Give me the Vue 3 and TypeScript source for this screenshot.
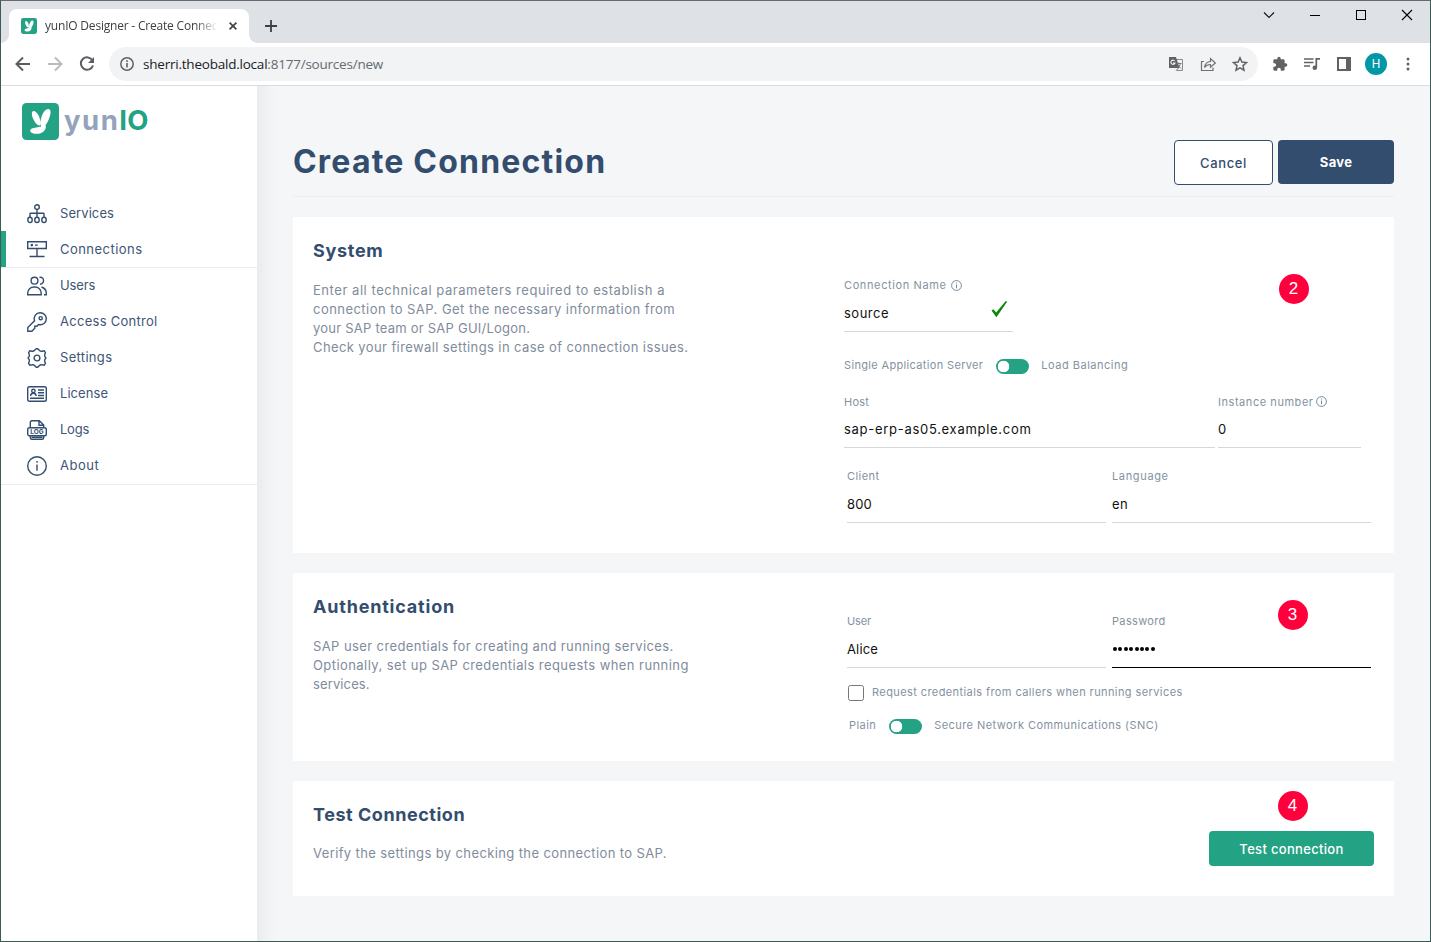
<script setup lang="ts">
import { ref } from 'vue'

interface NavItem { label: string; icon: string; tracking: number }
interface Line { text: string; tracking: number }

const nav: NavItem[] = [
  { label: 'Services', icon: 'services', tracking: 0.08 },
  { label: 'Connections', icon: 'connections', tracking: 0.46 },
  { label: 'Users', icon: 'users', tracking: -0.15 },
  { label: 'Access Control', icon: 'key', tracking: 0.28 },
  { label: 'Settings', icon: 'gear', tracking: 0.32 },
  { label: 'License', icon: 'license', tracking: 0.06 },
  { label: 'Logs', icon: 'logs', tracking: -0.24 },
  { label: 'About', icon: 'about', tracking: 0.5 },
]
const active = ref('Connections')

const systemText: Line[] = [
  { text: 'Enter all technical parameters required to establish a', tracking: 0.55 },
  { text: 'connection to SAP. Get the necessary information from', tracking: 0.455 },
  { text: 'your SAP team or SAP GUI/Logon.', tracking: 0.23 },
  { text: 'Check your firewall settings in case of connection issues.', tracking: 0.395 },
]
const authText: Line[] = [
  { text: 'SAP user credentials for creating and running services.', tracking: 0.405 },
  { text: 'Optionally, set up SAP credentials requests when running', tracking: 0.43 },
  { text: 'services.', tracking: 0.12 },
]
const testText: Line[] = [
  { text: 'Verify the settings by checking the connection to SAP.', tracking: 0.385 },
]
const track = (n: number) => ({ letterSpacing: `${n}px` })
</script>

<template>
  <div class="window">
    <div class="tabstrip">
      <div class="tab">
        <svg class="favicon" viewBox="0 0 37 37">
          <rect width="37" height="37" rx="5" fill="#23a284" />
          <path fill="#fff" d="M11.500 7C8.700 7.500 9 12 11 16C13 20 15.500 22.500 18 22.500C20 18 15.500 6.500 11.500 7ZM26.500 5.500C30.500 6 29 12.500 27 17C24.500 22 22.500 25.500 19.500 25C16.500 24 19.500 5.500 26.500 5.500ZM8 27.500C9.500 23.500 15 24.500 24.500 22C24.500 28 20.500 31.500 15 31.500C11.500 31.500 8.500 30 8 27.500Z" />
        </svg>
        <span class="tab-title">yunIO Designer - Create Connec</span>
        <svg class="tab-close" viewBox="0 0 8 8"><path d="M.6.600 7.400 7.400M7.400.600.600 7.400" fill="none" stroke="#3c4043" stroke-width="1.600" /></svg>
      </div>
      <svg class="plus" viewBox="0 0 12 12"><path d="M6 0V12M0 6H12" stroke="#3c4043" stroke-width="1.800" /></svg>
      <div class="win-controls">
        <svg viewBox="0 0 12 12"><path d="M1 3.500 6 8.500 11 3.500" fill="none" stroke="#111" stroke-width="1.100" /></svg>
        <svg viewBox="0 0 12 12"><path d="M1 6.500H11" stroke="#000" stroke-width="1" /></svg>
        <svg viewBox="0 0 12 12"><rect x="1.500" y="1.500" width="9" height="9" fill="none" stroke="#000" /></svg>
        <svg viewBox="0 0 12 12"><path d="M1 1 11 11M11 1 1 11" stroke="#000" stroke-width="1.100" /></svg>
      </div>
    </div>

    <div class="toolbar">
      <svg class="nav-ic" viewBox="0 0 16 16"><path d="M15 8H2M8 1.500 1.500 8 8 14.500" fill="none" stroke="#5a5d61" stroke-width="2" /></svg>
      <svg class="nav-ic" viewBox="0 0 16 16"><path d="M1 8H14M8 1.500 14.500 8 8 14.500" fill="none" stroke="#b9bbbe" stroke-width="2" /></svg>
      <svg class="nav-ic" viewBox="0 0 16 16"><path d="M13.500 4.500A6.200 6.200 0 1 0 14 9.500" fill="none" stroke="#5a5d61" stroke-width="2" /><path d="M15 1V7H9Z" fill="#5a5d61" /></svg>
      <div class="address">
        <svg class="site-info" viewBox="0 0 14 14"><circle cx="7" cy="7" r="6.200" fill="none" stroke="#5f6368" stroke-width="1.500" /><path d="M7 6V10.500M7 3.300V5" stroke="#5f6368" stroke-width="1.600" /></svg>
        <span class="url"><b>sherri.theobald.local</b>:8177/sources/new</span>
        <svg class="addr-ic" viewBox="0 0 16 16">
          <path d="M5.500 3.500H14.500V14.500H8.500" fill="none" stroke="#85888c" />
          <path d="M1 1H8L11.500 12H1Z" fill="#5f6368" />
          <path d="M6.700 5A2.100 2.100 0 1 0 7 7H5" fill="none" stroke="#f1f3f4" stroke-width="1.100" />
          <path d="M8.500 7.500H13.500M11 6.500V7.500M12.500 7.500C12 9.500 10.500 11 9.500 11.500M9.700 9 13 12.500M8.200 14.500 10.500 12" fill="none" stroke="#74777b" stroke-width="1" />
        </svg>
        <svg class="addr-ic" viewBox="0 0 16 16"><path d="M4 5.500H1.500V14.500H13V11.500M4.500 11.500C5 7.500 7 5.800 10.500 5.500V2.500L15.400 7 10.500 11.300V8.500C8 8.500 6 9.300 4.500 11.500Z" fill="none" stroke="#6d7074" stroke-width="1.200" /></svg>
        <svg class="addr-ic" viewBox="0 0 16 16"><path d="M8 1.800 9.850 6.100 14.500 6.500 11 9.600 12 14.200 8 11.800 4 14.200 5 9.600 1.500 6.500 6.150 6.100Z" fill="none" stroke="#5f6368" stroke-width="1.500" /></svg>
      </div>
      <svg class="tool-ic" viewBox="0 0 24 24"><path fill="#5f6368" d="M20.500 11H19V7c0-1.100-.9-2-2-2h-4V3.500a2.500 2.500 0 0 0-5 0V5H4c-1.100 0-2 .9-2 2v3.800h1.500a2.700 2.700 0 0 1 0 5.400H2V20c0 1.100.9 2 2 2h3.800v-1.500a2.700 2.700 0 0 1 5.400 0V22H17c1.100 0 2-.9 2-2v-4h1.500a2.500 2.500 0 0 0 0-5z" /></svg>
      <svg class="tool-ic" viewBox="0 0 16 16"><path d="M0 3H9.500M0 6.500H9.500M0 10H6" stroke="#5f6368" stroke-width="1.500" /><path d="M12.300 11.500V2.800H16" fill="none" stroke="#5f6368" stroke-width="1.700" /><circle cx="10.800" cy="11.700" r="2.300" fill="#5f6368" /></svg>
      <svg class="tool-ic" viewBox="0 0 16 16"><path fill="#5f6368" fill-rule="evenodd" d="M1 1H15V15H1ZM3 3V13H10V3Z" /></svg>
      <span class="avatar">H</span>
      <svg class="dots" viewBox="0 0 4 14"><circle cx="2" cy="2" r="1.500" fill="#5f6368" /><circle cx="2" cy="7" r="1.500" fill="#5f6368" /><circle cx="2" cy="12" r="1.500" fill="#5f6368" /></svg>
    </div>

    <div class="page">
      <aside class="sidebar">
        <div class="logo">
          <svg class="logo-mark" viewBox="0 0 37 37">
            <rect width="37" height="37" rx="4.500" fill="#23a284" />
            <path fill="#fff" d="M11.500 8C9.200 8.500 9.500 12.500 11.500 16.500C13.500 20.500 15.500 22.500 18 22.500C20 18 15.500 7.500 11.500 8ZM26.500 6C30 6.500 28.500 12.500 26.500 17C24.500 21.500 22.500 24.300 20 24C16.500 23 19.500 6 26.500 6ZM8 27.500C9.500 24 15 25 24 22.500C24 27.500 20.500 30.800 15 30.800C11.500 30.800 8.500 30 8 27.500Z" />
          </svg>
          <span class="word"><span class="yun">yun</span><span class="io">IO</span></span>
        </div>
        <nav>
          <a v-for="item in nav" :key="item.label" class="nav-item" :class="{ active: item.label === active }" @click="active = item.label">
            <svg class="glyph" viewBox="0 0 20 20">
              <template v-if="item.icon === 'services'">
                <circle cx="10" cy="3.100" r="2.300" /><path d="M10 5.500V13M3 13V10Q3 9.300 3.700 9.300H16.300Q17 9.300 17 10V13" />
                <ellipse cx="3" cy="15.900" rx="2.200" ry="2.600" /><ellipse cx="10" cy="15.900" rx="2.200" ry="2.600" /><ellipse cx="17" cy="15.900" rx="2.200" ry="2.600" />
              </template>
              <template v-else-if="item.icon === 'connections'">
                <path d="M.7 1.700H19.300V8.500H.7ZM10 8.500V16.500M2.500 16.500H17.500M8 5.100H10.800" /><circle cx="4.800" cy="5.100" r=".6" />
              </template>
              <template v-else-if="item.icon === 'users'">
                <circle cx="7.500" cy="4.700" r="3.400" /><path d="M.7 18.800V17C.7 13.500 3.500 11 7 11H8C11.500 11 14.200 13.500 14.200 17V18.800ZM12.500 1.300C17.800.600 17.800 8.200 13 8.200M14.500 11C17.500 12 19.300 14.300 19.300 17.300V18.800H17" />
              </template>
              <template v-else-if="item.icon === 'key'">
                <path d="M13.100.700C16.700.700 19.300 3.300 19.300 6.700C19.300 10.800 15.800 13.600 11.500 12.500L9.800 14.200H7.800V16.200L4.800 19.300H.8V15.500L7.500 8.700C6.300 4.500 9 .700 13.100.700Z" /><circle cx="13.700" cy="6.200" r="1.600" />
              </template>
              <template v-else-if="item.icon === 'gear'">
                <path d="M7.500 2.300 9.300.700H10.700L12.500 2.600Q13.500 3.600 15 3.200L17.200 2.800 18.400 4.600 17.700 6.800Q17.300 8 18.200 9L18.900 10 18.200 11Q17.300 12 17.700 13.200L18.400 15.400 17.200 17.200 15 16.800Q13.500 16.400 12.500 17.400L10.700 19.300H9.300L7.500 17.400Q6.500 16.400 5 16.800L2.800 17.200 1.600 15.400 2.300 13.200Q2.700 12 1.800 11L1.100 10 1.800 9Q2.700 8 2.300 6.800L1.600 4.600 2.800 2.800 5 3.200Q6.500 3.600 7.500 2.300Z" /><circle cx="10" cy="10" r="2.900" />
              </template>
              <template v-else-if="item.icon === 'license'">
                <rect x=".7" y="2.700" width="18.600" height="14.600" rx="1.800" /><circle cx="6.400" cy="7" r="1.700" /><path d="M3.700 12V11.500C3.700 8.500 9 8.500 9 11.500V12M11 6H17M11 8.800H17M11 11.500H17M3 14.300H17" />
              </template>
              <template v-else-if="item.icon === 'logs'">
                <path d="M3.300 7.500V2.500Q3.300.700 5 .700H12.300L16.700 5V7.500M12 .900V5.200H16.500M3.300 15.500V17.500Q3.300 19.300 5 19.300H15Q16.700 19.300 16.700 17.500V15.500M4.500 17.200H15.500" /><rect x=".7" y="7.800" width="18.600" height="8" rx="1.800" />
                <text x="10" y="14.400" text-anchor="middle">LOG</text>
              </template>
              <template v-else>
                <circle cx="10" cy="10" r="9.300" /><path d="M10 8.500V14.800M10 5V6.700" />
              </template>
            </svg>
            <span :style="track(item.tracking)">{{ item.label }}</span>
          </a>
        </nav>
      </aside>

      <main>
        <header class="head">
          <h1>Create Connection</h1>
          <div class="actions">
            <button class="btn cancel">Cancel</button>
            <button class="btn save">Save</button>
          </div>
        </header>

        <section class="card system">
          <div class="intro">
            <h2 class="h-system">System</h2>
            <p v-for="l in systemText" :key="l.text" :style="track(l.tracking)">{{ l.text }}</p>
          </div>
          <div class="form">
            <div class="field name">
              <label><span class="t58">Connection Name</span>
                <svg class="info" viewBox="0 0 11 11"><circle cx="5.500" cy="5.500" r="4.900" /><path d="M5.500 4.500V8.300M5.500 2.500V3.500" /></svg>
              </label>
              <div class="value"><span class="t50">source</span>
                <svg class="check" viewBox="0 0 17 17"><path d="M.5 9.500 2.500 8.200 5.200 11.500 14.500.300 16.300.500 5.400 16.200Z" fill="#088a08" /></svg>
              </div>
            </div>
            <div class="switch-row server">
              <span class="t33">Single Application Server</span><i class="switch"></i><span class="t48">Load Balancing</span>
            </div>
            <div class="pair host-row">
              <div class="field host"><label class="t21">Host</label><div class="value t69">sap-erp-as05.example.com</div></div>
              <div class="field instance">
                <label class="tight"><span class="t55">Instance number</span>
                  <svg class="info" viewBox="0 0 11 11"><circle cx="5.500" cy="5.500" r="4.900" /><path d="M5.500 4.500V8.300M5.500 2.500V3.500" /></svg>
                </label>
                <div class="value">0</div>
              </div>
            </div>
            <div class="pair equal client-row">
              <div class="field"><label class="t44">Client</label><div class="value t19">800</div></div>
              <div class="field"><label class="t63">Language</label><div class="value t37">en</div></div>
            </div>
          </div>
          <span class="badge">2</span>
        </section>

        <section class="card auth">
          <div class="intro">
            <h2 class="h-auth">Authentication</h2>
            <p v-for="l in authText" :key="l.text" :style="track(l.tracking)">{{ l.text }}</p>
          </div>
          <div class="form">
            <div class="pair equal user-row">
              <div class="field"><label class="tm14">User</label><div class="value t15">Alice</div></div>
              <div class="field focused"><label class="t32">Password</label>
                <div class="value bullets"><i v-for="n in 8" :key="n"></i></div>
              </div>
            </div>
            <div class="check-row"><i class="box"></i><span class="t40">Request credentials from callers when running services</span></div>
            <div class="switch-row snc">
              <span class="t39">Plain</span><i class="switch"></i><span class="t43">Secure Network Communications (SNC)</span>
            </div>
          </div>
          <span class="badge">3</span>
        </section>

        <section class="card test">
          <div class="intro">
            <h2 class="h-test">Test Connection</h2>
            <p v-for="l in testText" :key="l.text" :style="track(l.tracking)">{{ l.text }}</p>
          </div>
          <button class="btn run">Test connection</button>
          <span class="badge">4</span>
        </section>
      </main>
    </div>
  </div>
</template>

<style scoped>
.window { box-sizing: border-box; width: 1431px; height: 942px; border: 1px solid #3e5a54; border-top-color: #66696d; overflow: hidden; display: flex; flex-direction: column; background: #fff; font-family: Inter, "Open Sans", sans-serif; }
svg { display: block; flex: none; }

.tabstrip { height: 42px; background: #dee1e6; display: flex; align-items: flex-start; }
.tab { position: relative; box-sizing: border-box; width: 240px; height: 34px; margin: 8px 0 0 8px; padding: 0 12px; background: #fff; border-radius: 8px 8px 0 0; display: flex; align-items: center; }
.tab::before, .tab::after { content: ""; position: absolute; bottom: 0; width: 8px; height: 8px; }
.tab::before { left: -8px; background: radial-gradient(circle at 0 0, transparent 7.500px, #fff 8px); }
.tab::after { right: -8px; background: radial-gradient(circle at 100% 0, transparent 7.500px, #fff 8px); }
.favicon { width: 16px; height: 16px; }
.tab-title { width: 171px; margin-left: 8px; overflow: hidden; white-space: nowrap; font: 12px/18px "Open Sans", "Noto Sans", sans-serif; letter-spacing: -.2px; color: #3c4043; -webkit-mask-image: linear-gradient(90deg, #000 150px, transparent 173px); mask-image: linear-gradient(90deg, #000 150px, transparent 173px); }
.tab-close { width: 8px; height: 8px; margin-left: 13px; }
.plus { width: 12px; height: 12px; margin: 19px 0 0 16px; }
.win-controls { display: flex; gap: 34px; margin: 8px 17px 0 auto; }
.win-controls svg { width: 12px; height: 12px; }

.toolbar { height: 42px; border-bottom: 1px solid #dadce0; display: flex; align-items: center; padding-left: 14px; }
.nav-ic { width: 16px; height: 16px; margin-right: 16px; }
.address { width: 1149px; height: 34px; box-sizing: border-box; margin-left: -2px; padding: 0 10px; border-radius: 17px; background: #f1f3f4; display: flex; align-items: center; gap: 16px; }
.site-info { width: 14px; height: 14px; margin-right: -7px; margin-left: 1px; }
.url { flex: 1; font: 13.500px/20px "Open Sans", "Noto Sans", sans-serif; letter-spacing: -.22px; color: #666a6f; white-space: nowrap; }
.url b { font-weight: 400; color: #202124; }
.addr-ic { width: 16px; height: 16px; }
.tool-ic { width: 16px; height: 16px; margin-right: 16px; }
.address + .tool-ic { margin-left: 14px; }
.avatar { width: 22px; height: 22px; margin-left: -3px; border-radius: 50%; background: #0097a7; color: #fff; font: 12px/23px Roboto, sans-serif; text-align: center; }
.dots { width: 4px; height: 14px; margin-left: 19px; }

.page { flex: 1; display: flex; min-height: 0; }
.sidebar { width: 256px; background: #fff; }
.logo { display: flex; align-items: center; padding: 17px 0 0 21px; }
.logo-mark { width: 37px; height: 37px; }
.word { margin: -2px 0 0 5px; font-size: 27.500px; font-weight: 700; line-height: 37px; }
.yun { color: #94a3bd; letter-spacing: 1.500px; }
.io { color: #23a284; letter-spacing: .3px; }
nav { margin-top: 55px; border-bottom: 1px solid #e9ebee; padding-bottom: 1px; }
.nav-item { box-sizing: border-box; height: 36px; padding-left: 26px; display: flex; align-items: center; color: #3d5576; font-size: 13px; cursor: pointer; white-space: nowrap; }
.nav-item.active { padding-left: 21px; border-left: 5px solid #23a284; box-shadow: 0 1px #e9ebee; }
.nav-item span { margin-left: 13px; }
.glyph { width: 20px; height: 20px; margin-top: 1px; fill: none; stroke: #334d6e; stroke-width: 1.400; }
.glyph text { font: 700 6.500px Inter, sans-serif; fill: #334d6e; stroke: none; }

main { flex: 1; box-sizing: border-box; padding: 54px 36px 0; background: linear-gradient(90deg, #eaebee, #f2f3f5 12px, #f4f6f8 22px); }
.head { box-sizing: border-box; height: 57px; margin-bottom: 20px; border-bottom: 1px solid #eaecef; display: flex; justify-content: space-between; }
h1 { margin: -1px 0 0; font-size: 32px; line-height: 46px; font-weight: 700; letter-spacing: 1.200px; color: #334d6e; }
.actions { display: flex; gap: 5px; }
.btn { box-sizing: border-box; border: 0; border-radius: 4px; padding: 0; font-family: Inter, sans-serif; font-size: 13px; font-weight: 500; text-align: center; }
.cancel { width: 99px; height: 45px; background: #fff; border: 1px solid #334d6e; color: #334d6e; letter-spacing: .62px; }
.save { width: 116px; height: 44px; background: #334d6e; color: #fff; font-weight: 700; letter-spacing: .3px; }

.card { position: relative; box-sizing: border-box; width: 1101px; margin-bottom: 20px; padding-left: 20px; background: #fff; display: flex; }
.system { height: 336px; }
.auth { height: 188px; }
.test { height: 115px; }
.intro { width: 531px; padding-top: 20px; }
h2 { margin: 0 0 17px; font-size: 18px; line-height: 27px; font-weight: 700; color: #334d6e; }
.h-system { letter-spacing: .7px; }
.h-auth { letter-spacing: .8px; }
.h-test { letter-spacing: .54px; }
.test h2 { margin-bottom: 16px; }
.intro p { margin: 0; font-size: 13px; line-height: 19px; color: #7f8c9c; white-space: nowrap; }

.form { flex: 1; }
.field label { display: flex; align-items: center; gap: 4px; height: 20px; font-size: 11px; color: #8592a1; white-space: nowrap; }
.field label.tight { gap: 2px; }
.value { height: 36px; border-bottom: 1px solid #d3d8dd; display: flex; align-items: center; font-size: 13px; color: #111; }
.info { width: 11px; height: 11px; fill: none; stroke: #76879a; stroke-width: 1; }
.name { width: 169px; margin-top: 58px; }
.check { width: 17px; height: 17px; margin: -8px 5px 0 auto; }
.switch-row, .check-row { display: flex; align-items: center; font-size: 11px; line-height: 20px; color: #8592a1; white-space: nowrap; }
.switch { width: 33px; height: 15px; margin: 3px 12px 0 13px; border-radius: 8px; background: radial-gradient(circle at 7.500px 7.500px, #fff 5.500px, transparent 6.100px) #23a284; }
.server { margin-top: 23px; }
.pair { display: flex; }
.equal { gap: 6px; margin-left: 3px; }
.equal .field { width: 259px; }
.host-row { gap: 3px; margin-top: 17px; }
.host-row label { height: 19px; }
.host { width: 371px; }
.instance { width: 143px; }
.client-row { margin-top: 18px; }
.user-row { margin-top: 38px; }
.focused .value { border-color: #000; }
.bullets { gap: 1.400px; padding-left: 1px; }
.bullets i { width: 4px; height: 4px; border-radius: 50%; background: #000; }
.check-row { margin: 14px 0 0 4px; }
.box { box-sizing: border-box; width: 16px; height: 16px; margin: 1px 8px 0 0; border: 1px solid #767676; border-radius: 2.500px; }
.snc { margin: 13px 0 0 5px; }
.run { width: 165px; height: 35px; margin: 50px 20px 0 auto; background: #23a284; color: #fff; letter-spacing: .32px; }

.badge { position: absolute; width: 30px; height: 30px; border-radius: 50%; background: #ff003c; color: #fff; font: 17px/30px "Liberation Sans", Arial, sans-serif; text-align: center; }
.system .badge { left: 985.500px; top: 56.500px; }
.auth .badge { left: 984.500px; top: 26.500px; }
.test .badge { left: 984.500px; top: 9.500px; }

.t15 { letter-spacing: .15px; } .t19 { letter-spacing: .19px; } .t21 { letter-spacing: .21px; }
.t32 { letter-spacing: .34px; } .t33 { letter-spacing: .34px; } .t37 { letter-spacing: .37px; }
.t39 { letter-spacing: .42px; } .t40 { letter-spacing: .41px; } .t43 { letter-spacing: .45px; }
.t44 { letter-spacing: .46px; } .t48 { letter-spacing: .5px; } .t50 { letter-spacing: .5px; }
.t55 { letter-spacing: .55px; } .t58 { letter-spacing: .62px; } .t63 { letter-spacing: .65px; }
.t69 { letter-spacing: .71px; } .tm14 { letter-spacing: -.14px; }
</style>

<style>
body { margin: 0; }
</style>
